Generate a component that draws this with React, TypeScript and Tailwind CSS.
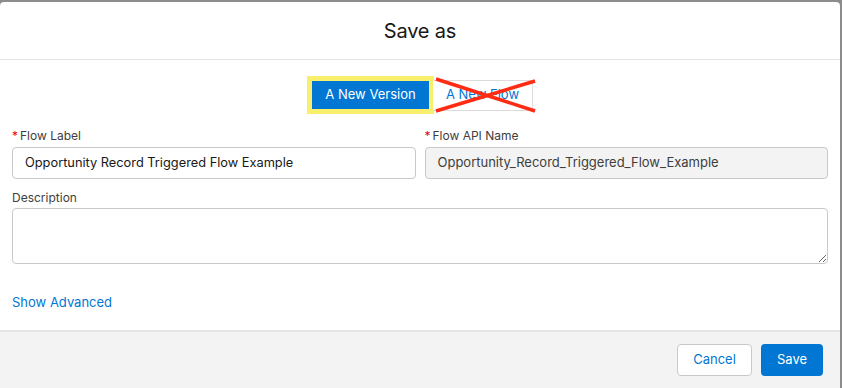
import React from "react";

export default function App() {
  return (
    <div className="w-[842px] h-[388px] overflow-hidden bg-[#8c8c8c] pt-[2px] font-['Inter',sans-serif]">
      <div className="w-[840px] h-[386px] bg-white rounded-t-[4px] flex flex-col">
        {/* Header */}
        <div className="h-[58px] border-b border-[#e5e5e5] flex items-center justify-center">
          <h2 className="text-[20px] text-[#181818] tracking-[-0.2px]">Save as</h2>
        </div>

        {/* Body */}
        <div className="flex-1 px-3 pt-4">
          <div className="flex justify-center">
            <div className="relative flex items-center">
              <div className="border-[5px] border-[#f8f06c]">
                <button className="w-[117px] h-[28px] bg-[#0176d3] text-white text-[13px]">
                  A New Version
                </button>
              </div>
              <button className="w-[100px] h-[31px] border border-[#dddbda] border-l-0 rounded-r-[4px] bg-white text-[#0176d3] text-[13px] -ml-px">
                A New Flow
              </button>
              <svg
                className="absolute left-[127px] top-[1px] pointer-events-none"
                width="104"
                height="36"
                viewBox="0 0 104 36"
              >
                <line x1="2" y1="2" x2="101" y2="34" stroke="#ff2b12" strokeWidth="3.5" />
                <line x1="2" y1="34" x2="101" y2="4" stroke="#ff2b12" strokeWidth="3.5" />
              </svg>
            </div>
          </div>

          <div className="grid grid-cols-2 gap-x-[9px] mt-[13px]">
            <div>
              <label className="block text-[12px] text-[#3e3e3c] leading-[18px]">
                <span className="text-[#ea001e] mr-[2px]">*</span>Flow Label
              </label>
              <div className="mt-[2px] h-[32px] border border-[#c9c9c9] rounded-[4px] flex items-center px-3 text-[12.8px] text-[#181818]">
                Opportunity Record Triggered Flow Example
              </div>
            </div>
            <div>
              <label className="block text-[12px] text-[#3e3e3c] leading-[18px]">
                <span className="text-[#ea001e] mr-[2px]">*</span>Flow API Name
              </label>
              <div className="mt-[2px] h-[32px] border border-[#c9c9c9] rounded-[4px] bg-[#f3f3f3] flex items-center px-3 text-[13px] text-[#3e3e3c]">
                Opportunity_Record_Triggered_Flow_Example
              </div>
            </div>
          </div>

          <label className="block mt-[10px] text-[12px] text-[#3e3e3c] leading-[18px]">Description</label>
          <textarea className="mt-[1px] block w-full h-[56px] border border-[#c9c9c9] rounded-[4px] resize-y outline-none" />

          <div className="mt-[29px] text-[13px] text-[#0176d3] leading-[18px]">Show Advanced</div>
        </div>

        {/* Footer */}
        <div className="h-[58px] border-t-2 border-[#e5e5e5] bg-[#f3f3f3] flex justify-end items-start pt-[12px] pr-[17px] gap-[9px]">
          <button className="h-[32px] w-[75px] border border-[#c9c9c9] rounded-[4px] bg-white text-[#0176d3] text-[13px]">
            Cancel
          </button>
          <button className="h-[32px] w-[62px] rounded-[4px] bg-[#0176d3] text-white text-[13px]">
            Save
          </button>
        </div>
      </div>
    </div>
  );
}
